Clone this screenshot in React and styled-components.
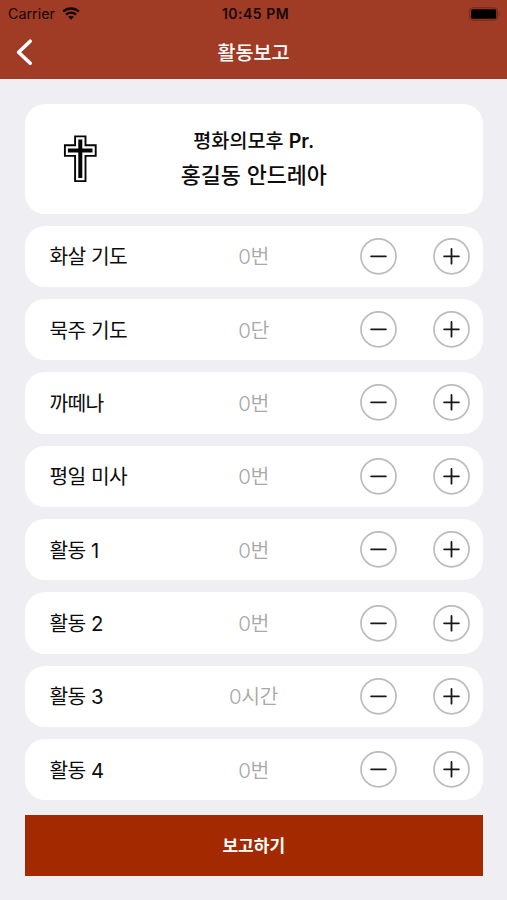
import React from "react";
import styled, { createGlobalStyle } from "styled-components";

const GlobalStyle = createGlobalStyle`
  * { box-sizing: border-box; }
  body { margin: 0; background: #efeff3; }
  button { font: inherit; border: 0; margin: 0; padding: 0; background: none; color: inherit; }
`;

const Screen = styled.div`
  width: 507px;
  height: 900px;
  overflow: hidden;
  background: #efeff3;
  color: #0c0c0c;
  font-family: Inter, "Noto Sans CJK KR", sans-serif;
  white-space: nowrap;
`;

const Header = styled.header`
  height: 79px;
  background: #a03b26;
  color: #fff;
`;

const StatusBar = styled.div`
  display: grid;
  grid-template-columns: 1fr auto 1fr;
  align-items: center;
  height: 27px;
  padding: 0 6px 0 8px;
  color: #160705;
  font-size: 14.3px;
  line-height: 27px;
`;

const Carrier = styled.div`
  display: flex;
  align-items: center;
  gap: 7px;
`;

const Clock = styled.div`
  padding-left: 2px;
  font-size: 14px;
  font-weight: 600;
  letter-spacing: 0.5px;
`;

const Battery = styled.svg`
  justify-self: end;
`;

const NavBar = styled.div`
  display: grid;
  grid-template-columns: 60px 1fr 60px;
  align-items: center;
  height: 50px;
`;

const BackButton = styled.button`
  display: flex;
  padding-left: 14px;
`;

const Title = styled.h1`
  margin: 0;
  padding-top: 1px;
  text-align: center;
  font-size: 19.6px;
  font-weight: 500;
  line-height: 28px;
`;

const Content = styled.main`
  display: flex;
  flex-direction: column;
  gap: 12.25px;
  padding: 24.5px 24.5px 0 25px;
`;

const Card = styled.section`
  height: 110px;
  border-radius: 20px;
  background: #fff;
  display: grid;
  grid-template-columns: 110px 1fr 110px;
  align-items: center;
`;

const Cross = styled.svg`
  justify-self: center;
`;

const Names = styled.div`
  text-align: center;
  font-weight: 500;
`;

const Team = styled.div`
  font-size: 19.6px;
  line-height: 32px;
`;

const Suffix = styled.span`
  font-weight: 600;
`;

const Member = styled.div`
  font-size: 21.8px;
  line-height: 36px;
`;

const Row = styled.div`
  display: grid;
  grid-template-columns: 150px 1fr 37px 73.5px;
  align-items: center;
  height: 61.1px;
  padding: 0 12.5px 0 24.5px;
  border-radius: 20px;
  background: #fff;
`;

const Label = styled.div`
  padding-top: 2px;
  font-size: 20.3px;
  line-height: 30px;
  letter-spacing: -0.6px;
  word-spacing: 0.3px;
`;

const Value = styled.div`
  width: 108px;
  padding-top: 2px;
  text-align: center;
  color: #a8a8a8;
  font-size: 20.5px;
  font-weight: 350;
  line-height: 30px;
  letter-spacing: -0.5px;
`;

const StepButton = styled.button`
  display: flex;
  justify-self: end;
`;

const Submit = styled.button`
  display: block;
  width: 457.5px;
  height: 61px;
  margin: 14.3px 0 0 25px;
  padding-bottom: 1px;
  background: #a32a00;
  color: #fff;
  font-size: 17px;
  font-weight: 700;
  text-align: center;
`;

const activities = [
  ["화살 기도", "0번"],
  ["묵주 기도", "0단"],
  ["까떼나", "0번"],
  ["평일 미사", "0번"],
  ["활동 1", "0번"],
  ["활동 2", "0번"],
  ["활동 3", "0시간"],
  ["활동 4", "0번"],
];

function Stepper({ plus }) {
  return (
    <StepButton aria-label={plus ? "더하기" : "빼기"}>
      <svg width="37" height="37" viewBox="0 0 37 37" fill="none">
        <circle cx="18.5" cy="18.3" r="17.5" stroke="#bcbcbc" strokeWidth="1.7" />
        <path
          d={plus ? "M11.1 18.3H25.9M18.5 10.9V25.7" : "M11.1 18.3H25.9"}
          stroke="#181818"
          strokeWidth="1.8"
          strokeLinecap="round"
        />
      </svg>
    </StepButton>
  );
}

export default function App() {
  return (
    <>
      <GlobalStyle />
      <Screen>
        <Header>
          <StatusBar>
            <Carrier>
              Carrier
              <svg width="18" height="13" viewBox="0 0 18 13" fill="none" stroke="#160705" strokeWidth="2.4">
                <path d="M1.2 4.5C5.5.4 12.5.4 16.8 4.5" />
                <path d="M4 7.6C6.8 4.9 11.2 4.9 14 7.6" />
                <path d="M6.1 9.8Q9 7.6 11.9 9.8L9 12.7Z" fill="#160705" stroke="none" />
              </svg>
            </Carrier>
            <Clock>10:45 PM</Clock>
            <Battery width="32" height="14" viewBox="0 0 32 14">
              <rect x="0.8" y="0.8" width="27.8" height="12.4" rx="3.2" fill="none" stroke="#6d2819" strokeWidth="1" />
              <rect x="2.2" y="2.2" width="25" height="9.6" rx="1.5" fill="#000" />
              <path d="M30 5Q31.6 7 30 9Z" fill="#6d2819" />
            </Battery>
          </StatusBar>
          <NavBar>
            <BackButton aria-label="뒤로">
              <svg width="20" height="28" viewBox="0 0 20 28" fill="none">
                <path d="M16.2 3.2L4.6 14.2L16.2 25.2" stroke="#fff" strokeWidth="3.6" strokeLinecap="round" strokeLinejoin="round" />
              </svg>
            </BackButton>
            <Title>활동보고</Title>
          </NavBar>
        </Header>
        <Content>
          <Card>
            <Cross width="34" height="48" viewBox="0 0 34 48">
              <path d="M12.1 1.4H22.5V10.3H32.7V20.9H22.5V46.1H12.1V20.9H1.9V10.3H12.1Z" fill="#fff" stroke="#050505" strokeWidth="1.9" />
              <path d="M17.3 4.5V43M4.9 15.6H29.5" stroke="#050505" strokeWidth="4" />
            </Cross>
            <Names>
              <Team>평화의모후 <Suffix>Pr.</Suffix></Team>
              <Member>홍길동 안드레아</Member>
            </Names>
          </Card>
          {activities.map(([label, value]) => (
            <Row key={label}>
              <Label>{label}</Label>
              <Value>{value}</Value>
              <Stepper />
              <Stepper plus />
            </Row>
          ))}
        </Content>
        <Submit>보고하기</Submit>
      </Screen>
    </>
  );
}
